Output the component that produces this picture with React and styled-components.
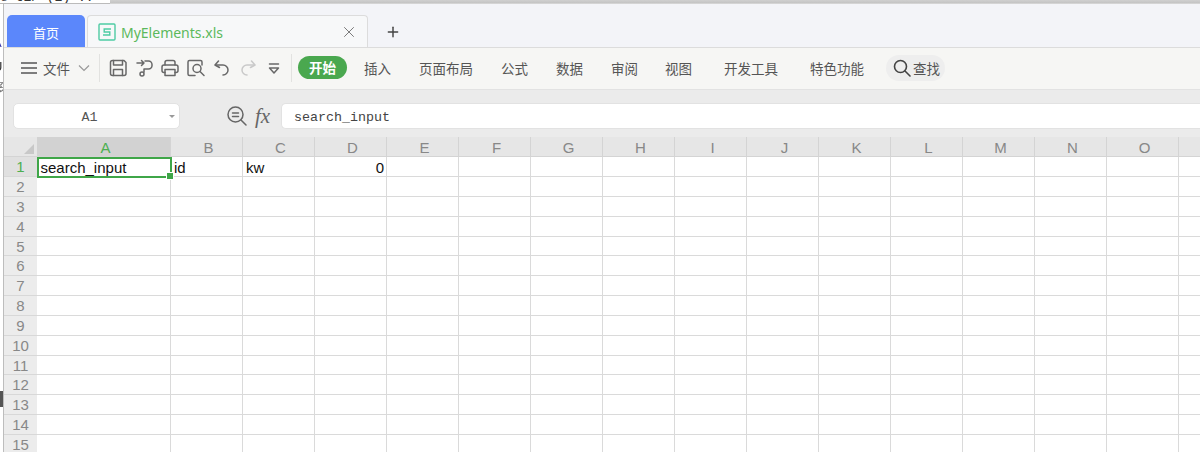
import React from "react";
import styled, { createGlobalStyle } from "styled-components";
import { X, Plus } from "lucide-react";

const Global = createGlobalStyle`
  html, body { margin: 0; padding: 0; background: #fff; overflow: hidden; }
  #root { width: 1200px; height: 452px; overflow: hidden; }
  * { box-sizing: border-box; }
`;

const CJK = `"Noto Sans CJK SC", "Noto Sans", sans-serif`;

const Page = styled.div`
  width: 1200px;
  height: 452px;
  display: flex;
  flex-direction: column;
  overflow: hidden;
  font-family: "Liberation Sans", ${CJK};
  filter: blur(0.35px);
`;
const TopStrip = styled.div`
  height: 4px;
  flex: none;
  display: flex;
  overflow: hidden;
`;
const TopText = styled.div`
  width: 110px;
  flex: none;
  background: #fff;
  border-bottom: 1px solid #bbb;
  font: 13px/1 "Liberation Mono", monospace;
  color: #333;
  white-space: pre;
  overflow: hidden;
  span { display: block; margin-top: -9px; }
`;
const TopLine = styled.div`
  flex: 1;
  background: linear-gradient(#d0d0d0, #c4c4c4 70%, #e0e0e0);
`;
const Main = styled.div`
  flex: 1;
  display: flex;
  min-height: 0;
`;
const LeftStrip = styled.div`
  width: 4px;
  flex: none;
  border-right: 1px solid #bdbdbd;
  background: #fff;
  display: flex;
  flex-direction: column;
  overflow: hidden;
`;
const Frag = styled.span`
  display: block;
  flex: none;
  height: 14px;
  margin-top: ${(p) => p.$gap}px;
  margin-left: -7px;
  font: 13px/14px "Liberation Sans", ${CJK};
  color: ${(p) => p.$color};
`;
const DarkBlock = styled.div`
  flex: none;
  height: 16px;
  margin-top: 218px;
  background: #555;
`;
const Window = styled.div`
  flex: 1;
  min-width: 0;
  display: flex;
  flex-direction: column;
`;

const TabBar = styled.div`
  height: 43px;
  flex: none;
  background: #f3f4f8;
  display: flex;
  align-items: flex-end;
  padding-left: 3px;
`;
const HomeTab = styled.div`
  width: 78px;
  height: 32px;
  background: #5b87fb;
  border-radius: 5px 5px 0 0;
  color: #fff;
  font: 13px/35px ${CJK};
  text-align: center;
`;
const FileTab = styled.div`
  width: 281px;
  height: 32px;
  margin-left: 2px;
  background: #f7f8f9;
  border: 1px solid #dcdcdc;
  border-bottom: none;
  border-radius: 4px 4px 0 0;
  display: flex;
  align-items: center;
  padding: 1px 9px 0 10px;
  color: #5cb85c;
  font: 14px "Noto Sans", sans-serif;
`;
const SheetIcon = styled.svg`
  width: 18px;
  height: 18px;
  margin-right: 5px;
  flex: none;
`;
const TabName = styled.span`
  flex: 1;
`;
const AddTab = styled.div`
  width: 16px;
  height: 16px;
  margin: 0 0 7px 17px;
  color: #444;
  display: flex;
`;

const Toolbar = styled.div`
  height: 42px;
  flex: none;
  background: #f6f6f4;
  border-top: 1px solid #dcdcdc;
  display: flex;
  align-items: center;
  padding: 0 0 2px 17px;
  color: #555;
  font: 13.5px ${CJK};
`;
const FileMenu = styled.div`
  display: flex;
  align-items: center;
  gap: 6px;
`;
const Divider = styled.div`
  width: 1px;
  height: 28px;
  background: #e2e2e0;
  margin-left: ${(p) => p.$left}px;
`;
const QuickBar = styled.div`
  display: flex;
  margin-left: 5px;
`;
const QuickIcon = styled.svg`
  width: 26px;
  height: 20px;
  display: block;
  fill: none;
  stroke: ${(p) => (p.$off ? "#c9c9c9" : "#686868")};
  stroke-width: 1.5;
  stroke-linejoin: round;
  stroke-linecap: round;
`;
const StartPill = styled.div`
  width: 49px;
  height: 23px;
  margin-left: 6px;
  border-radius: 12px;
  background: #4aa84f;
  color: #fff;
  font: 700 13.5px/23px ${CJK};
  text-align: center;
`;
const MenuItem = styled.div`
  margin-left: ${(p) => p.$gap}px;
  white-space: nowrap;
`;
const SearchPill = styled.div`
  width: 59px;
  height: 26px;
  margin-left: 22px;
  border-radius: 13px;
  background: #eeeeee;
  display: flex;
  align-items: center;
  padding-left: 7px;
  gap: 2px;
`;

const FormulaBar = styled.div`
  height: 48px;
  flex: none;
  background: #ebebeb;
  border-top: 1px solid #e2e2e2;
  padding: 13px 0 8px 9px;
  display: flex;
  align-items: flex-start;
`;
const NameBox = styled.div`
  width: 167px;
  height: 26px;
  background: #fff;
  border: 1px solid #e2e2e2;
  border-radius: 5px;
  display: flex;
  align-items: center;
  justify-content: center;
  padding: 2px 14px 0 0;
  position: relative;
  font: 13.33px "Liberation Mono", monospace;
  color: #555;
`;
const Caret = styled.span`
  position: absolute;
  right: 4px;
  top: 11px;
  border: 3px solid transparent;
  border-top: 3px solid #999;
`;
const ZoomIcon = styled.svg`
  width: 20px;
  height: 20px;
  margin: 3px 0 0 47px;
  flex: none;
  fill: none;
  stroke: #666;
  stroke-width: 1.5;
  stroke-linecap: round;
`;
const Fx = styled.div`
  width: 34px;
  padding-left: 8px;
  font: italic 21px/26px "Liberation Serif", serif;
  color: #666;
  flex: none;
`;
const FormulaInput = styled.div`
  flex: 1;
  height: 26px;
  background: #fff;
  border: 1px solid #e2e2e2;
  border-right: none;
  border-radius: 5px 0 0 5px;
  padding-left: 12px;
  font: 13.33px/28px "Liberation Mono", monospace;
  color: #444;
`;

const Sheet = styled.div`
  flex: 1;
  min-height: 0;
  overflow: hidden;
  background: #fff;
  display: grid;
  grid-template-columns: 33px 134px repeat(15, 72px);
  grid-template-rows: 20px 20px repeat(15, 19.85px);
`;
const Corner = styled.div`
  background: #e6e6e6;
  border-bottom: 1px solid #d4d4d4;
  position: relative;
  &::after {
    content: "";
    position: absolute;
    right: 3px;
    bottom: 2px;
    border-style: solid;
    border-width: 0 0 10px 10px;
    border-color: transparent transparent #c8c8c8 transparent;
  }
`;
const ColHead = styled.div`
  background: ${(p) => (p.$active ? "#d2d2d2" : "#e6e6e6")};
  border-right: 1px solid #d4d4d4;
  border-bottom: 1px solid #d4d4d4;
  color: ${(p) => (p.$active ? "#4caf50" : "#888")};
  font-size: 15px;
  line-height: 22px;
  text-align: center;
  padding-left: 4px;
`;
const RowHead = styled.div`
  background: ${(p) => (p.$active ? "#e0e0e0" : "#ececec")};
  border-bottom: 1px solid #d8d8d8;
  color: ${(p) => (p.$active ? "#4caf50" : "#888")};
  font-size: 15px;
  line-height: 20px;
  text-align: center;
`;
const Cell = styled.div`
  border-right: 1px solid #dadada;
  border-bottom: 1px solid #dadada;
  padding: 0 ${(p) => (p.$num ? 2 : 3)}px 0 3px;
  color: #111;
  font-size: 15px;
  line-height: 21px;
  white-space: nowrap;
  text-align: ${(p) => (p.$num ? "right" : "left")};
`;
const ActiveCell = styled(Cell)`
  position: relative;
  margin: 0 -1px -1px 0;
  border: 2.5px solid #3fa648;
  padding: 0 2px 0 1.5px;
  line-height: 18px;
  &::after {
    content: "";
    position: absolute;
    right: -4px;
    bottom: -4px;
    width: 6px;
    height: 6px;
    background: #3fa648;
    border: 1px solid #fff;
  }
`;

const COL_LABELS = [..."ABCDEFGHIJKLMNO", ""];
const ROWS = Array.from({ length: 15 }, (_, i) => i + 1);
const FIRST = ["", "id", "kw", "0"];

const MENU = [
  ["插入", 17],
  ["页面布局", 28],
  ["公式", 28],
  ["数据", 28],
  ["审阅", 28],
  ["视图", 27],
  ["开发工具", 32],
  ["特色功能", 32],
];

const Icon = ({ children, off }) => (
  <QuickIcon viewBox="0 0 26 20" $off={off}>
    {children}
  </QuickIcon>
);

export default function App() {
  return (
    <Page>
      <Global />
      <TopStrip>
        <TopText>
          <span>e=t1/ (1) ..</span>
        </TopText>
        <TopLine />
      </TopStrip>
      <Main>
        <LeftStrip>
          <Frag $gap={32} $color="#33a">A</Frag>
          <Frag $gap={10} $color="#333">U</Frag>
          <Frag $gap={7} $color="#777">多</Frag>
          <Frag $gap={16} $color="#333">=</Frag>
          <Frag $gap={34} $color="#226">0</Frag>
          <DarkBlock />
        </LeftStrip>
        <Window>
          <TabBar>
            <HomeTab>首页</HomeTab>
            <FileTab>
              <SheetIcon viewBox="0 0 18 18" fill="none">
                <rect x="1" y="1" width="16" height="16" rx="1" stroke="#4fcba4" strokeWidth="1.4" />
                <path d="M13 6H6.200v3h5.600v3H5" stroke="#4fcba4" strokeWidth="1.4" />
              </SheetIcon>
              <TabName>MyElements.xls</TabName>
              <X size={18} color="#777" strokeWidth={1.3} />
            </FileTab>
            <AddTab>
              <Plus size={16} strokeWidth={2.2} />
            </AddTab>
          </TabBar>
          <Toolbar>
            <FileMenu>
              <svg width="16" height="12" viewBox="0 0 16 12" stroke="#555" strokeWidth="1.4">
                <path d="M0 1h16M0 6h16M0 11h16" />
              </svg>
              <span>文件</span>
              <svg width="12" height="8" viewBox="0 0 12 8" fill="none" stroke="#999" strokeWidth="1.2" style={{ marginLeft: 2 }}>
                <path d="M1 1.500l5 5 5-5" />
              </svg>
            </FileMenu>
            <Divider $left={9} />
            <QuickBar>
              <Icon>
                <path d="M5.500 4.500a2 2 0 0 1 2-2h11.500l2 2v11a2 2 0 0 1-2 2h-11.500a2 2 0 0 1-2-2z" />
                <path d="M8.500 2.500v4.500h9V2.500M8.500 17.500v-6h9v6" />
              </Icon>
              <Icon>
                <path d="M6 5h7M10.500 2.500L13 5l-2.500 2.500" />
                <path d="M14 3h3.500a3.500 3.500 0 0 1 3.500 3.500v1a3.500 3.500 0 0 1-3.500 3.500H13v3" />
                <circle cx="11" cy="16" r="2" />
              </Icon>
              <Icon>
                <path d="M8 7V4.500a2 2 0 0 1 2-2h6a2 2 0 0 1 2 2V7" />
                <path d="M8 14.500H7a2 2 0 0 1-2-2V9a2 2 0 0 1 2-2h12a2 2 0 0 1 2 2v3.500a2 2 0 0 1-2 2h-1" />
                <path d="M8 11.500h10v6H8z" />
              </Icon>
              <Icon>
                <path d="M12 17.500H6.500a1.500 1.500 0 0 1-1.500-1.500V4a1.500 1.500 0 0 1 1.500-1.500h11A1.500 1.500 0 0 1 19 4v3" />
                <circle cx="14" cy="10.500" r="4" />
                <path d="M17 13.500l4 4" />
              </Icon>
              <Icon>
                <path d="M9.500 3L6 7l4.500 2.500" />
                <path d="M6.500 7H14a5 5 0 0 1 5 5 5 5 0 0 1-5 5" />
              </Icon>
              <Icon off>
                <path d="M16.500 3L20 7l-4.500 2.500" />
                <path d="M19.500 7H12a5 5 0 0 0-5 5 5 5 0 0 0 5 5" />
              </Icon>
              <Icon>
                <path d="M8.500 6h9M8.500 10l4.500 5 4.500-5z" />
              </Icon>
            </QuickBar>
            <Divider $left={4} />
            <StartPill>开始</StartPill>
            {MENU.map(([label, gap]) => (
              <MenuItem key={label} $gap={gap}>
                {label}
              </MenuItem>
            ))}
            <SearchPill>
              <svg width="18" height="18" viewBox="0 0 18 18" fill="none" stroke="#444" strokeWidth="1.6" strokeLinecap="round">
                <circle cx="7.500" cy="7.500" r="6" />
                <path d="M12 12l5 5" />
              </svg>
              <span>查找</span>
            </SearchPill>
          </Toolbar>
          <FormulaBar>
            <NameBox>
              A1
              <Caret />
            </NameBox>
            <ZoomIcon viewBox="0 0 20 20">
              <circle cx="8.500" cy="8.500" r="7.500" />
              <path d="M14 14l5 5M5.500 7h6M5.500 10.500h6" />
            </ZoomIcon>
            <Fx>fx</Fx>
            <FormulaInput>search_input</FormulaInput>
          </FormulaBar>
          <Sheet>
            <Corner />
            {COL_LABELS.map((c) => (
              <ColHead key={c || "blank"} $active={c === "A"}>
                {c}
              </ColHead>
            ))}
            {ROWS.map((r) => (
              <React.Fragment key={r}>
                <RowHead $active={r === 1}>{r}</RowHead>
                {COL_LABELS.map((c, i) => {
                  if (r === 1 && i === 0) return <ActiveCell key={i}>search_input</ActiveCell>;
                  return (
                    <Cell key={i} $num={r === 1 && i === 3}>
                      {r === 1 ? FIRST[i] : ""}
                    </Cell>
                  );
                })}
              </React.Fragment>
            ))}
          </Sheet>
        </Window>
      </Main>
    </Page>
  );
}
